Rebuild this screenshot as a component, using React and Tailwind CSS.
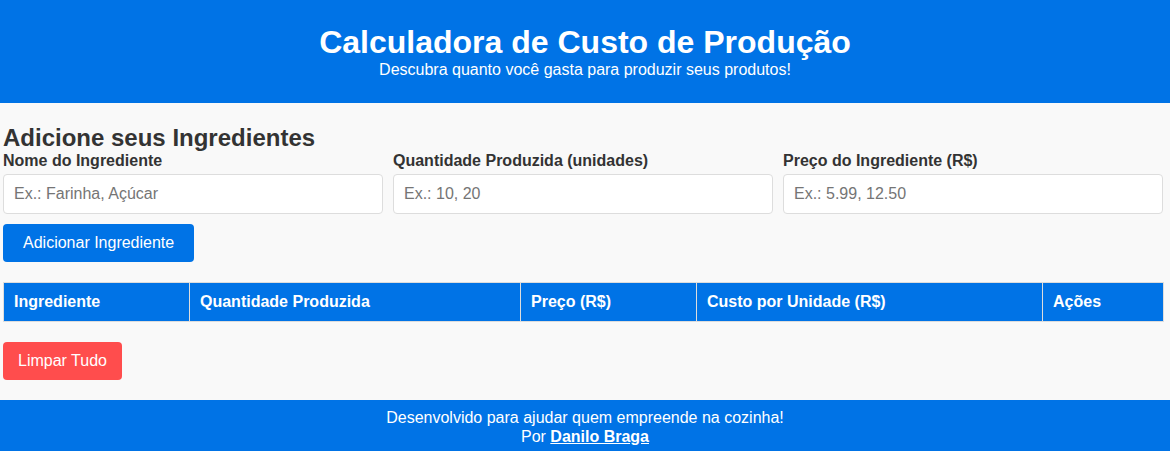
import React from "react";

const fields = [
  { label: "Nome do Ingrediente", placeholder: "Ex.: Farinha, Açúcar" },
  { label: "Quantidade Produzida (unidades)", placeholder: "Ex.: 10, 20" },
  { label: "Preço do Ingrediente (R$)", placeholder: "Ex.: 5.99, 12.50" },
];

const columns = [
  { title: "Ingrediente", width: "w-[186px]" },
  { title: "Quantidade Produzida", width: "w-[331px]" },
  { title: "Preço (R$)", width: "w-[176px]" },
  { title: "Custo por Unidade (R$)", width: "w-[346px]" },
  { title: "Ações", width: "w-[121px]" },
];

export default function App() {
  return (
    <div className="min-h-[451px] bg-[#f9f9f9] font-['Liberation_Sans',Arial,sans-serif] text-[#333]">
      <header className="bg-[#0073e6] pt-[24px] pb-[24px] text-center text-white">
        <h1 className="text-[32px] font-bold leading-[1.15]">Calculadora de Custo de Produção</h1>
        <p className="text-[16px] leading-[1.15]">Descubra quanto você gasta para produzir seus produtos!</p>
      </header>

      <main className="pt-[21px] pl-[3px] pr-[7px]">
        <h2 className="text-[24px] font-bold leading-[1.15]">Adicione seus Ingredientes</h2>
        <div className="grid grid-cols-3 gap-x-[10px]">
          {fields.map((f) => (
            <div key={f.label} className="flex flex-col">
              <label className="text-[16px] font-bold leading-[1.15]">{f.label}</label>
              <input
                type="text"
                placeholder={f.placeholder}
                className="mt-[4px] h-[40px] rounded-[4px] border border-[#ddd] bg-white px-[10px] text-[16px] text-[#333] placeholder:text-[#757575] outline-none"
              />
            </div>
          ))}
        </div>

        <button
          type="button"
          className="mt-[10px] h-[38px] rounded-[4px] bg-[#0073e6] px-[20px] text-[16px] text-white"
        >
          Adicionar Ingrediente
        </button>

        <table className="mt-[20px] w-[1161px] border-collapse">
          <thead>
            <tr className="bg-[#0073e6] text-white">
              {columns.map((c) => (
                <th
                  key={c.title}
                  className={`${c.width} h-[39px] border border-[#ddd] px-[10px] text-left text-[16px] font-bold`}
                >
                  {c.title}
                </th>
              ))}
            </tr>
          </thead>
          <tbody />
        </table>

        <button
          type="button"
          className="mt-[20px] h-[38px] rounded-[4px] bg-[#ff4d4d] px-[15px] text-[16px] text-white"
        >
          Limpar Tudo
        </button>
      </main>

      <footer className="mt-[20px] bg-[#0073e6] pt-[9px] pb-[6px] text-center text-[16px] leading-[1.15] text-white">
        <p>Desenvolvido para ajudar quem empreende na cozinha!</p>
        <p>
          Por <a href="#" className="font-bold underline">Danilo Braga</a>
        </p>
      </footer>
    </div>
  );
}
